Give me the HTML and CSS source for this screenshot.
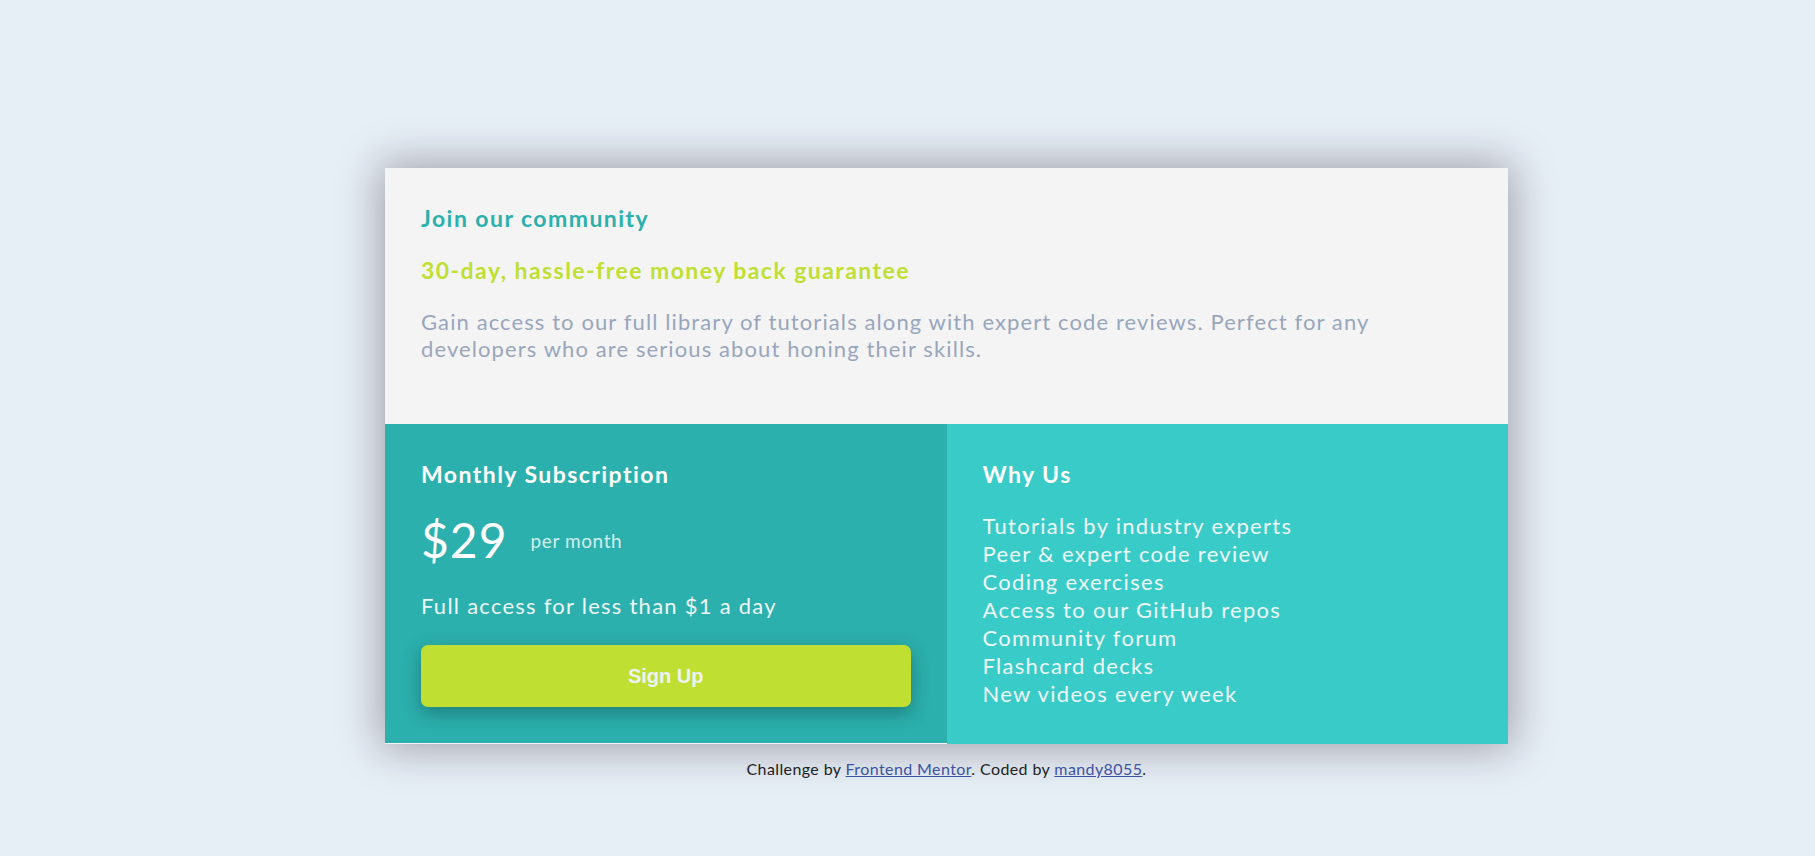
FILE: index.html
```html
<!DOCTYPE html>
<html lang="en">
<head>
<meta charset="utf-8">
<title>Single price grid component</title>
<link rel="stylesheet" href="styles.css">
</head>
<body>
<main class="page">
  <section class="card">
    <div class="intro">
      <h1 class="intro-title">Join our community</h1>
      <h2 class="intro-sub">30-day, hassle-free money back guarantee</h2>
      <p class="intro-text">Gain access to our full library of tutorials along with expert code reviews. Perfect for any developers who are serious about honing their skills.</p>
    </div>
    <div class="bottom">
      <div class="sub">
        <h3 class="panel-title">Monthly Subscription</h3>
        <div class="price">
          <span class="price-amount">$29</span>
          <span class="price-period">per month</span>
        </div>
        <p class="sub-text">Full access for less than $1 a day</p>
        <button class="signup" type="button">Sign Up</button>
      </div>
      <div class="why">
        <h3 class="panel-title">Why Us</h3>
        <ul class="why-list">
          <li>Tutorials by industry experts</li>
          <li>Peer &amp; expert code review</li>
          <li>Coding exercises</li>
          <li>Access to our GitHub repos</li>
          <li>Community forum</li>
          <li>Flashcard decks</li>
          <li>New videos every week</li>
        </ul>
      </div>
    </div>
  </section>
  <footer class="attribution">
    Challenge by <a href="#">Frontend Mentor</a>. Coded by <a href="#">mandy8055</a>.
  </footer>
</main>
</body>
</html>
```
FILE: styles.css
```css
* { box-sizing: border-box; }

html, body {
  margin: 0;
  padding: 0;
  background: #e6eef6;
}

body {
  font-family: Lato, "Open Sans", sans-serif;
  height: 856px;
  overflow: hidden;
}

.page {
  display: flex;
  flex-direction: column;
  align-items: center;
  padding: 168px 0 0 78px;
}

.card {
  width: 1123px;
  background: #f4f4f4;
  box-shadow: 0 0 40px 4px rgba(35, 20, 30, 0.36);
}

.intro {
  padding: 36px 36px 62px;
}

.intro-title,
.intro-sub,
.panel-title {
  margin: 0;
  font-size: 23px;
  line-height: 29px;
  font-weight: 700;
  letter-spacing: 1.45px;
}

.intro-title { color: #2bb0ad; }

.intro-sub {
  margin-top: 23px;
  color: #bfdf32;
}

.intro-text {
  margin: 24px 0 0;
  max-width: 1000px;
  font-size: 22px;
  line-height: 26.5px;
  letter-spacing: 1.1px;
  color: #98a6bd;
}

.bottom {
  display: flex;
}

.sub, .why {
  flex: 1 1 0;
  padding: 36px;
  color: #fff;
}

.sub {
  background: #2bb0ad;
  margin-bottom: 1px;
}

.why { background: #38cbc8; }

.panel-title { color: #fff; }

.price {
  display: flex;
  align-items: center;
  gap: 23px;
  margin-top: 22px;
  height: 58px;
}

.price-amount {
  font-size: 48px;
  line-height: 58px;
  letter-spacing: 1px;
  color: #fff;
}

.price-period {
  font-size: 19px;
  letter-spacing: 0.6px;
  color: #d3eeee;
}

.sub-text {
  margin: 23px 0 0;
  font-size: 22px;
  line-height: 28px;
  letter-spacing: 1.25px;
  color: #eef6f6;
}

.signup {
  display: block;
  width: 100%;
  height: 62px;
  margin-top: 25px;
  border: 0;
  border-radius: 7px;
  background: #bfe032;
  color: #eef2f6;
  font-family: "Liberation Sans", Arial, sans-serif;
  font-size: 20px;
  font-weight: 700;
  box-shadow: 0 6px 18px rgba(15, 55, 55, 0.42);
  cursor: pointer;
}

.why-list {
  list-style: none;
  margin: 23px 0 0;
  padding: 0;
  font-size: 22px;
  line-height: 28px;
  letter-spacing: 1.3px;
  color: #eef8f8;
}

.attribution {
  margin-top: 15px;
  font-size: 16px;
  line-height: 20px;
  letter-spacing: 0.4px;
  color: #222;
}

.attribution a {
  color: #3e52a3;
}
```
